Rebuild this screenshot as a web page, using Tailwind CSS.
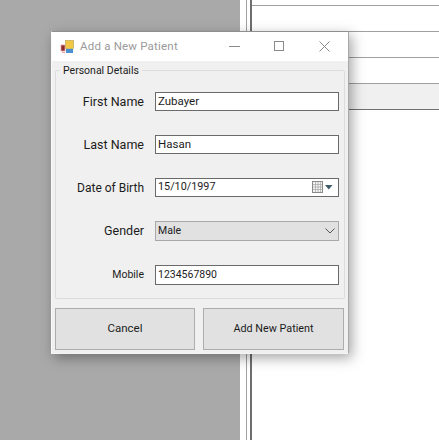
<!DOCTYPE html>
<html lang="en">
  <head>
    <meta charset="UTF-8" />
    <title>Add a New Patient</title>
    <script src="https://cdn.jsdelivr.net/npm/@tailwindcss/browser@4"></script>
  </head>
  <body class="bg-white">
    <div class="relative flex h-[440px] w-[439px] overflow-hidden font-['Roboto','Open_Sans',sans-serif] text-[12px] text-[#1c1c1c]">
      <!-- background: disabled parent form -->
      <div class="h-full w-[240px] bg-[#a9a9a9]"></div>
      <div class="h-full w-[6px] bg-white"></div>
      <div class="h-full w-[4px] border-l border-[#a0a0a0] bg-white"></div>
      <div class="flex h-full flex-1 flex-col border-l-2 border-[#6e6e6e] pt-[5px]">
        <div class="h-[26px] border-t border-[#a0a0a0]"></div>
        <div class="h-[26px] border-t border-[#a0a0a0]"></div>
        <div class="h-[26px] border-t border-[#a0a0a0]"></div>
        <div class="h-[26px] border-t border-[#a0a0a0] bg-[#f0f0f0]"></div>
        <div class="h-[3px] border-t border-[#707070]"></div>
      </div>

      <!-- dialog window -->
      <div class="absolute left-[51px] top-[31px] flex h-[323px] w-[298px] flex-col border border-t-[#8f8f8f] border-r-[#a8a8a8] border-b-[#f4f4f4] border-l-[#fafafa] bg-[#f0f0f0] shadow-[3px_4px_12px_rgba(0,0,0,0.35)]">
        <div class="flex h-[29px] items-center bg-white pl-[8px]">
          <svg width="14" height="14" viewBox="0 0 14 14">
            <rect x="5.5" y="0.5" width="8" height="8" fill="#f2c744" stroke="#bfa552" stroke-width="0.7" />
            <rect x="1" y="5" width="4" height="6" fill="#8c2a2a" stroke="#e8a0a0" stroke-width="0.8" />
            <rect x="6" y="9" width="7" height="4" fill="#4a90d0" />
            <rect x="2" y="12" width="3" height="1" fill="#e8a0a0" />
          </svg>
          <span class="ml-[6px] text-[11.5px] tracking-[0.2px] text-[#9a9a9a]">Add a New Patient</span>
          <div class="ml-auto flex items-center">
            <svg class="mr-[34px]" width="11" height="11" viewBox="0 0 11 11"><path d="M0 5.5H11" stroke="#8a8a8a" fill="none" /></svg>
            <svg class="mr-[34px]" width="11" height="11" viewBox="0 0 11 11"><rect x="0.5" y="0.5" width="9" height="9" stroke="#8a8a8a" fill="none" /></svg>
            <svg class="mr-[18px]" width="11" height="11" viewBox="0 0 11 11"><path d="M0.5 0.5L10.5 10.5M10.5 0.5L0.5 10.5" stroke="#8a8a8a" fill="none" /></svg>
          </div>
        </div>

        <div class="relative mx-[3px] mt-[9px] h-[229px] rounded-[2px] border border-[#dcdcdc]">
          <span class="absolute left-[4px] top-[-7px] bg-[#f0f0f0] px-[3px] text-[10.5px] leading-[14px]">Personal Details</span>
          <div class="flex flex-col gap-[24px] pr-[5px] pt-[21px]">
            <div class="flex h-[19px] items-center">
              <label class="w-[88px] pt-[2px] text-right text-[12.5px]">First Name</label>
              <div class="ml-[11px] flex h-[19px] flex-1 items-center border border-[#6a6a6a] bg-white pl-[2px] text-[11.5px]">Zubayer</div>
            </div>
            <div class="flex h-[19px] items-center">
              <label class="w-[88px] pt-[2px] text-right text-[12.5px]">Last Name</label>
              <div class="ml-[11px] flex h-[19px] flex-1 items-center border border-[#6a6a6a] bg-white pl-[2px] text-[11.5px]">Hasan</div>
            </div>
            <div class="flex h-[19px] items-center">
              <label class="w-[88px] pt-[1px] text-right text-[12px]">Date of Birth</label>
              <div class="ml-[11px] flex h-[19px] flex-1 items-center border border-[#6a6a6a] bg-white pl-[2px] text-[10.8px]">
                15/10/1997
                <svg class="ml-auto mr-[5px]" width="21" height="13" viewBox="0 0 21 13">
                  <rect x="0.5" y="0.5" width="10" height="11" fill="#f2f2f2" stroke="#8a8a8a" />
                  <path d="M3.5 1V11M6 1V11M8.5 1V11M1 3.5H10M1 6H10M1 8.5H10" stroke="#a8a8a8" stroke-width="0.7" />
                  <path d="M13 4H20.5L16.75 8.5Z" fill="#3f5b68" />
                </svg>
              </div>
            </div>
            <div class="flex h-[20px] items-center">
              <label class="w-[88px] pt-[1px] text-right text-[12.5px]">Gender</label>
              <div class="ml-[11px] flex h-[20px] flex-1 items-center border border-[#a8a8a8] bg-[#e1e1e1] pl-[2px] text-[10.5px]">
                Male
                <svg class="ml-auto mr-[3px]" width="10" height="6" viewBox="0 0 10 6"><path d="M0.5 0.5L5 5L9.5 0.5" stroke="#555" fill="none" /></svg>
              </div>
            </div>
            <div class="flex h-[20px] items-center">
              <label class="w-[88px] text-right text-[10.5px]">Mobile</label>
              <div class="ml-[11px] flex h-[20px] flex-1 items-center border border-[#6a6a6a] bg-white pl-[2px] text-[10.5px]">1234567890</div>
            </div>
          </div>
        </div>

        <div class="mx-[3px] flex gap-[8px] pt-[9px]">
          <button class="h-[42px] w-[140px] border border-[#adadad] bg-[#e1e1e1] text-[11.5px]">Cancel</button>
          <button class="h-[42px] w-[141px] border border-[#adadad] bg-[#e1e1e1] text-[10.8px]">Add New Patient</button>
        </div>
      </div>
    </div>
  </body>
</html>
